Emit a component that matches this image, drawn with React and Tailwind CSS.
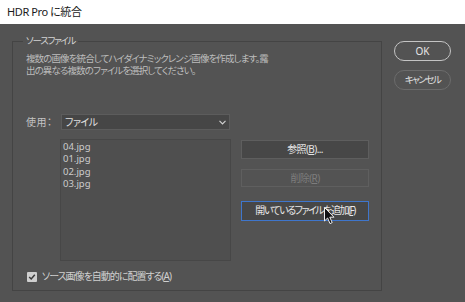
import React from "react";

const font = { fontFamily: '"Noto Sans", "Noto Sans CJK JP", sans-serif' };

const files = ["04.jpg", "01.jpg", "02.jpg", "03.jpg"];

const Cursor = () => (
    <svg width="12" height="18" viewBox="0 0 12 18" className="absolute left-[83px] top-[11px]">
        <path d="M0.5 0.5 L0.5 14 L3.6 11 L6 16.6 L8.2 15.6 L5.8 10.2 L10 10.2 Z" fill="#111" stroke="#eee" strokeWidth="1" />
    </svg>
);

const App = () => {
    return (
        <div className="w-[465px] h-[302px] bg-[#535353] overflow-hidden [font-feature-settings:'palt']" style={font}>
            <div className="h-6 bg-white flex items-center pl-[7px] text-[11px] tracking-[-0.4px] text-[#1a1a1a]">
                HDR Pro に統合
            </div>
            <div className="flex pl-3 pt-[17px] gap-3">
                <div className="relative w-[370px] h-[250px] border border-[#444444]">
                    <span className="absolute -top-[7px] left-[10px] px-[3px] bg-[#535353] text-[9.5px] leading-[12px] text-[#d4d4d4] tracking-[-1.3px]">
                        ソースファイル
                    </span>
                    <div className="pl-[13px] pt-[11px] text-[9.5px] leading-[12px] text-[#bdbdbd] tracking-[-0.9px]">
                        <p>複数の画像を統合してハイダイナミックレンジ画像を作成します。露</p>
                        <p>出の異なる複数のファイルを選択してください。</p>
                    </div>
                    <div className="flex items-center mt-[37px] pl-[13px]">
                        <span className="w-[35px] text-[10px] text-[#c4c4c4] tracking-[0.5px]">使用：</span>
                        <div className="w-[169px] h-[16px] bg-[#464646] border border-[#5c5c5c] flex items-center justify-between px-[3px]">
                            <span className="text-[10px] leading-[14px] text-[#e0e0e0] tracking-[-0.5px]">ファイル</span>
                            <svg width="7" height="5" viewBox="0 0 7 5">
                                <path d="M0.5 0.8 L3.5 3.8 L6.5 0.8" fill="none" stroke="#d0d0d0" strokeWidth="1.2" />
                            </svg>
                        </div>
                    </div>
                    <div className="flex mt-[9px] pl-[47px] gap-[10px]">
                        <div className="w-[171px] h-[122px] bg-[#4f4f4f] border border-[#474747] pl-[2px] pt-[1px]">
                            {files.map((f) => (
                                <div key={f} className="h-[12.3px] text-[9.5px] leading-[12.3px] text-[#cdcdcd]">
                                    {f}
                                </div>
                            ))}
                        </div>
                        <div className="flex flex-col pt-[1px]">
                            <button className="w-[128px] h-[19px] bg-[#474747] border border-[#5e5e5e] text-[10px] text-[#e4e4e4] tracking-[-0.6px]">
                                参照(<span className="underline">B</span>)...
                            </button>
                            <button className="mt-[10px] w-[128px] h-[18px] bg-[#535353] border border-[#5f5f5f] text-[10px] text-[#7d7d7d] tracking-[-0.6px]">
                                削除(<span className="underline">R</span>)
                            </button>
                            <div className="relative mt-[9px]">
                                <button className="w-[128px] h-[20px] bg-[#474747] border border-[#3f76cc] text-[10px] text-[#e8e8e8] tracking-[-1.5px]">
                                    開いているファイルを追加(<span className="underline">F</span>)
                                </button>
                                <Cursor />
                            </div>
                        </div>
                    </div>
                    <div className="flex items-center mt-[8px] pl-[14px] gap-[5px]">
                        <div className="w-[10px] h-[10px] bg-[#cfcfcf] rounded-[1px] flex items-center justify-center">
                            <svg width="8" height="8" viewBox="0 0 8 8">
                                <path d="M1.2 4 L3.2 6 L6.8 1.8" fill="none" stroke="#3a3a3a" strokeWidth="1.5" />
                            </svg>
                        </div>
                        <span className="text-[10px] text-[#d0d0d0] tracking-[-1px]">
                            ソース画像を自動的に配置する(<span className="underline">A</span>)
                        </span>
                    </div>
                </div>
                <div className="flex flex-col gap-[9px]">
                    <button className="w-[57px] h-[20px] rounded-full border-[1.5px] border-[#c4c4c4] text-[10px] text-[#e6e6e6]">
                        OK
                    </button>
                    <button className="w-[57px] h-[20px] rounded-full border-[1.5px] border-[#6c6c6c] text-[9.5px] text-[#e0e0e0] tracking-[-1.5px]">
                        キャンセル
                    </button>
                </div>
            </div>
        </div>
    );
};

export default App;
